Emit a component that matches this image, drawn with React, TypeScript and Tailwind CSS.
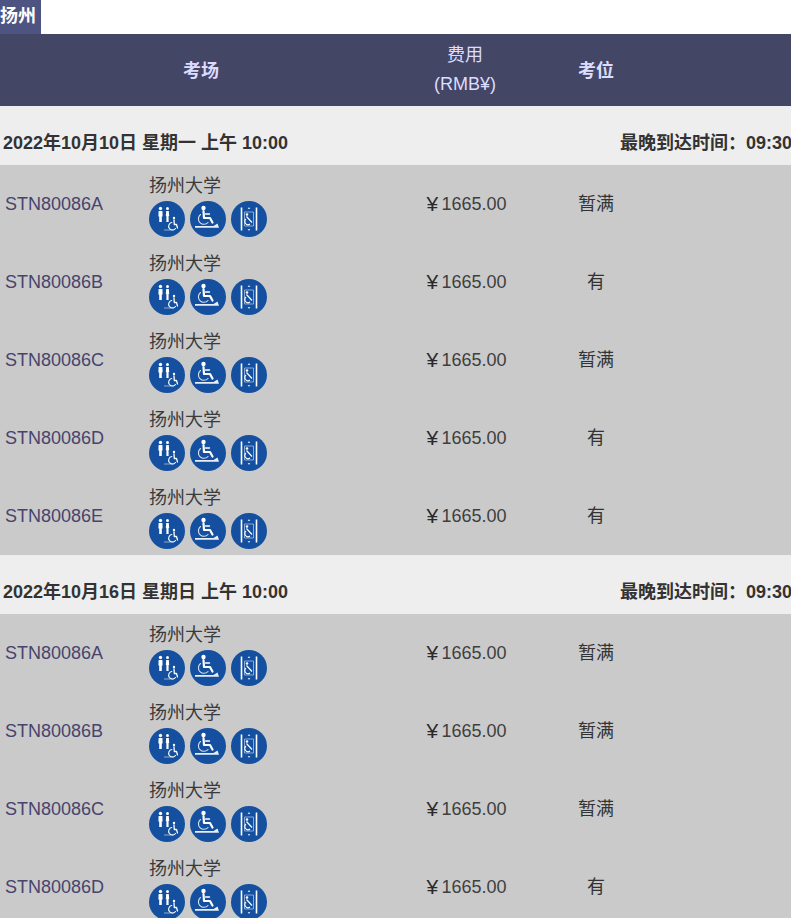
const font = { fontFamily: '"Liberation Sans", "Noto Sans CJK SC", sans-serif' };

function Disc({ children }: { children: React.ReactNode }) {
  return (
    <svg viewBox="0 0 36 36" className="w-9 h-9 shrink-0 blur-[0.4px]">
      <circle cx="18" cy="18" r="18" fill="#14509f" />
      {children}
    </svg>
  );
}

function IconToilet() {
  return (
    <Disc>
      <circle cx="11.5" cy="7.5" r="1.7" fill="#fff" />
      <path d="M9.6 10h3.8l.2 5.6h-.8V21h-2.6v-5.4h-.8z" fill="#fff" />
      <circle cx="18.5" cy="7.5" r="1.5" fill="#fff" />
      <path d="M17.2 10h2.6l.4 5h-.6v6h-2.2v-6h-.6z" fill="#fff" />
      <circle cx="25" cy="17" r="1.2" fill="#fff" />
      <path d="M25 19 L25.3 23.5 H27.5 L28.5 27" fill="none" stroke="#fff" strokeWidth="1.3" strokeLinecap="round" strokeLinejoin="round" />
      <path d="M22.8 21.5 A3.8 3.8 0 1 0 26.5 27.5" fill="none" stroke="#fff" strokeWidth="1.1" strokeLinecap="round" />
      <path d="M15 29 H25" stroke="#dbe6f5" strokeWidth="1" opacity="0.6" />
    </Disc>
  );
}

function IconAccess() {
  return (
    <Disc>
      <circle cx="13.5" cy="7" r="2.2" fill="#fff" />
      <path d="M13.5 10 L14 17 H20 L22.5 21.5" fill="none" stroke="#fff" strokeWidth="2.2" strokeLinecap="round" strokeLinejoin="round" />
      <path d="M15.5 13 H19.5" stroke="#fff" strokeWidth="1.4" strokeLinecap="round" />
      <path d="M10.5 13.5 A5.5 5.5 0 1 0 18 21.5" fill="none" stroke="#fff" strokeWidth="1.1" strokeLinecap="round" opacity="0.85" />
      <path d="M5 26.8 H29 L27.5 22.5 L23.5 25 H5z" fill="#fff" opacity="0.9" />
    </Disc>
  );
}

function IconLift() {
  return (
    <Disc>
      <path d="M10.5 6.5 V29.5 M25.5 6.5 V29.5" stroke="#fff" strokeWidth="1.6" />
      <path d="M13.5 11 H22.5 V25 H13.5z" fill="none" stroke="#a9c0e2" strokeWidth="0.8" />
      <circle cx="16" cy="13.5" r="1.3" fill="#fff" />
      <path d="M15.5 15.5 L21 21.5 M15 18 A3 3 0 1 0 19 23" fill="none" stroke="#fff" strokeWidth="1.2" />
      <path d="M18 6 l1.3 2h-2.6z M18 30 l1.3 -2h-2.6z" fill="#cfdcf0" />
    </Disc>
  );
}

type Row = { code: string; seat: string };

function VenueRow({ code, seat }: Row) {
  return (
    <div className="grid grid-cols-[149px_253px_126px_136px_127px] h-[78px] bg-[#cacaca] text-[18px] text-[#333333]">
      <div className="pl-[5px] pt-[27px] leading-[24px] text-[#47446e]">{code}</div>
      <div className="pt-[9px]">
        <div className="leading-[24px] h-[27px] text-[#3a3a3a]">扬州大学</div>
        <div className="flex gap-[5px]">
          <IconToilet />
          <IconAccess />
          <IconLift />
        </div>
      </div>
      <div className="pt-[27px] pl-[3px] leading-[24px] flex justify-center">
        <span className="w-[15px] text-[21px] text-[#2a2a2a]">¥</span>
        <span className="text-[#3f3f3f]">1665.00</span>
      </div>
      <div className="pt-[27px] leading-[24px] text-center">{seat}</div>
      <div />
    </div>
  );
}

function GroupHead({ date }: { date: string }) {
  return (
    <div className="flex justify-between h-[59px] pt-[25px] pl-[3px] bg-[#eeeeee] text-[18px] leading-[24px] font-bold text-[#333333] whitespace-nowrap overflow-hidden">
      <span>{date}</span>
      <span className="mr-[-1px]">最晚到达时间：09:30</span>
    </div>
  );
}

const first: Row[] = [
  { code: "STN80086A", seat: "暂满" },
  { code: "STN80086B", seat: "有" },
  { code: "STN80086C", seat: "暂满" },
  { code: "STN80086D", seat: "有" },
  { code: "STN80086E", seat: "有" },
];
const second: Row[] = [
  { code: "STN80086A", seat: "暂满" },
  { code: "STN80086B", seat: "暂满" },
  { code: "STN80086C", seat: "暂满" },
  { code: "STN80086D", seat: "有" },
];

export default function App() {
  return (
    <div style={font} className="w-[791px] h-[918px] overflow-hidden bg-white">
      <div className="w-[41px] h-[34px] bg-[#4e5482] text-white font-bold text-[18px] leading-[32px] whitespace-nowrap">扬州</div>
      <div className="grid grid-cols-[402px_126px_136px_127px] h-[72px] bg-[#444666] text-[18px] text-[#dcdcff]">
        <div className="text-center font-bold pt-[1px] leading-[72px]">考场</div>
        <div className="text-center pt-[6px] leading-[30px]">
          <div className="h-[29px]">费用</div>
          <div>(RMB¥)</div>
        </div>
        <div className="text-center font-bold pt-[1px] leading-[72px]">考位</div>
        <div />
      </div>
      <GroupHead date="2022年10月10日 星期一 上午 10:00" />
      {first.map((r) => (
        <VenueRow key={r.code} {...r} />
      ))}
      <GroupHead date="2022年10月16日 星期日 上午 10:00" />
      {second.map((r) => (
        <VenueRow key={r.code} {...r} />
      ))}
    </div>
  );
}
